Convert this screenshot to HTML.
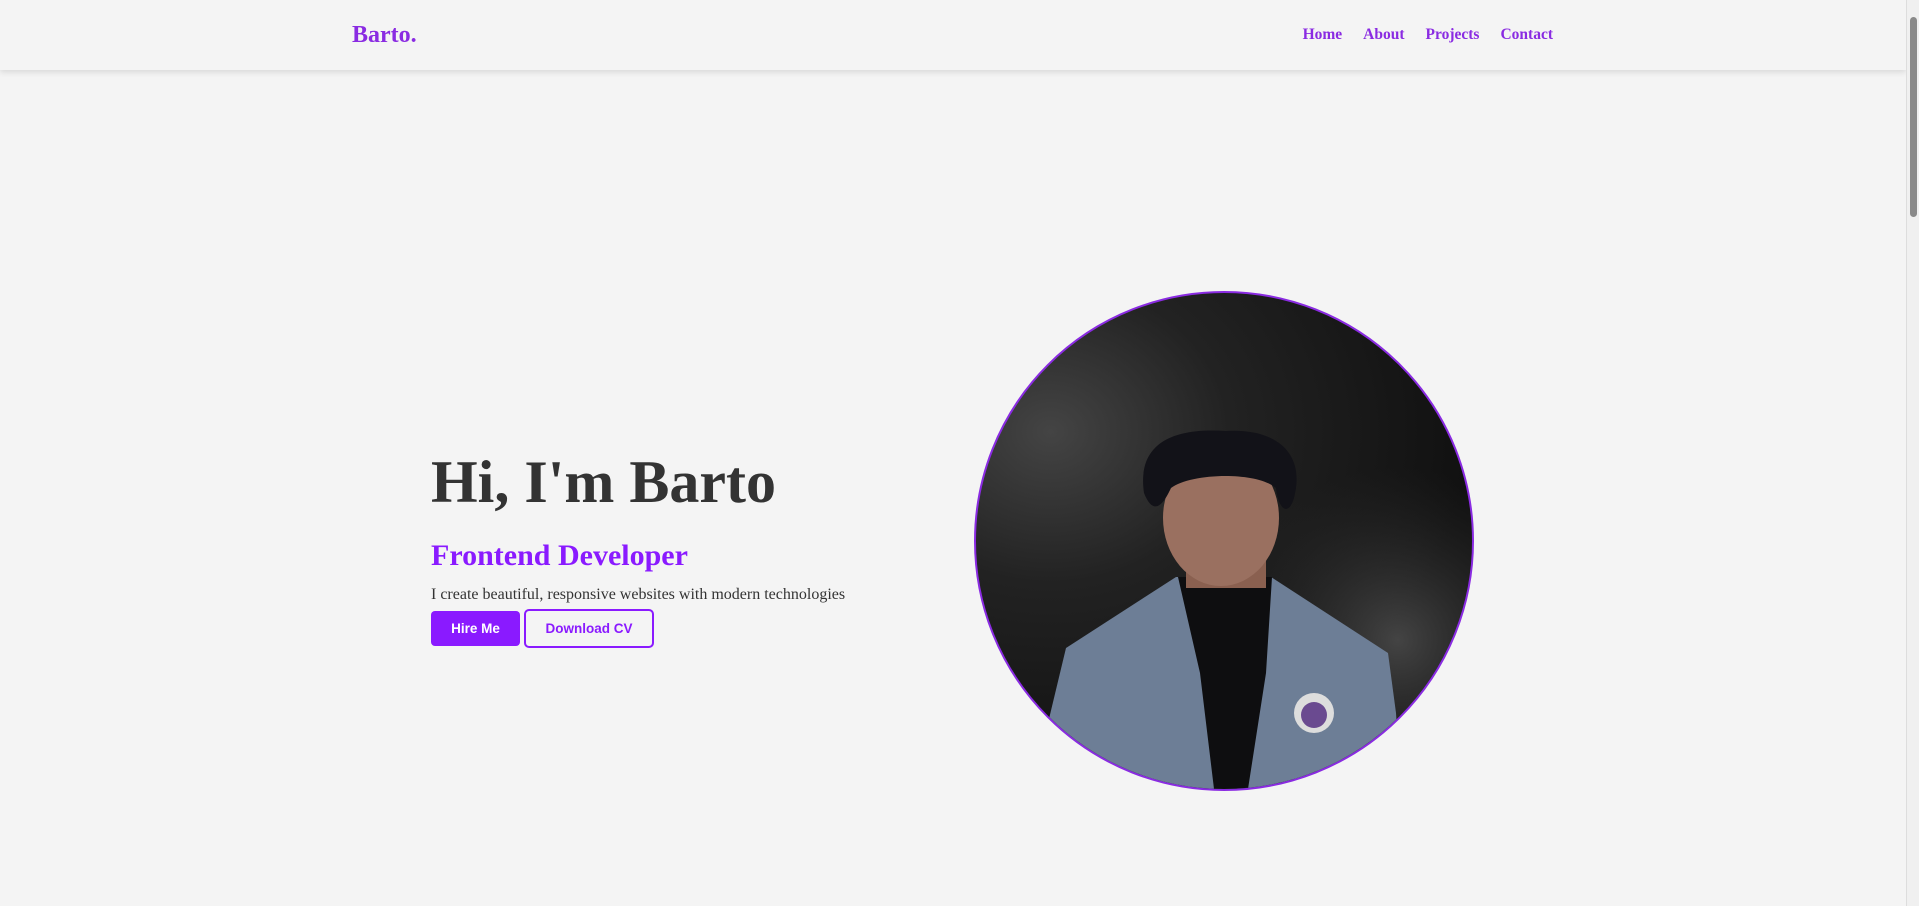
<!DOCTYPE html>
<html><head><meta charset="utf-8"><style>
*{margin:0;padding:0;box-sizing:border-box}
html,body{width:1919px;height:906px;overflow:hidden;background:#f4f4f4}
body{font-family:"Liberation Serif",serif;position:relative}
header{position:absolute;left:0;top:0;width:1906px;height:70px;background:#f4f4f4;box-shadow:0 2px 6px rgba(0,0,0,.12)}
.logo{position:absolute;left:352px;top:22px;font-size:24px;font-weight:bold;color:#8a2be2}
nav{position:absolute;right:353px;top:26px;font-size:15.5px;font-weight:bold;color:#8a2be2}
nav span{margin-left:21px}
h1{position:absolute;left:431px;top:452px;font-size:60px;font-weight:bold;color:#333;line-height:1;white-space:nowrap}
h2{position:absolute;left:431px;top:541px;font-size:30px;font-weight:bold;color:#8a1aff;line-height:1;white-space:nowrap}
p{position:absolute;left:431px;top:586px;font-size:16px;color:#333;white-space:nowrap}
.b1{position:absolute;left:431px;top:611px;width:89px;height:35px;background:#8a1aff;border-radius:4px;color:#fff;font:bold 13.5px "Liberation Sans",sans-serif;text-align:center;line-height:35px}
.b2{position:absolute;left:524px;top:609px;width:130px;height:39px;border:2px solid #8a1aff;border-radius:5px;color:#8a1aff;font:bold 13.5px "Liberation Sans",sans-serif;text-align:center;line-height:35px}
.pic{position:absolute;left:974px;top:291px;width:500px;height:500px;border-radius:50%;border:2px solid #8a2be2;overflow:hidden;background:radial-gradient(ellipse at 15% 28%,#444 0%,#222 30%,#111 70%)}
.sb{position:absolute;right:0;top:0;width:13px;height:906px;background:#f0f0f0;border-left:1px solid #ddd}
.sb div{position:absolute;left:3px;top:17px;width:7px;height:200px;background:#8a8a8a;border-radius:4px}
</style></head><body>
<header><div class="logo">Barto.</div>
<nav><span>Home</span><span>About</span><span>Projects</span><span>Contact</span></nav></header>
<h1>Hi, I'm Barto</h1>
<h2>Frontend Developer</h2>
<p>I create beautiful, responsive websites with modern technologies</p>
<div class="b1">Hire Me</div><div class="b2">Download CV</div>
<div class="pic"><svg width="496" height="496" viewBox="0 0 496 496">
<defs><radialGradient id="g" cx="0.85" cy="0.7" r="0.35"><stop offset="0" stop-color="#666" stop-opacity=".6"/><stop offset="1" stop-color="#333" stop-opacity="0"/></radialGradient></defs>
<rect width="496" height="496" fill="url(#g)"/>
<polygon points="200,284 90,355 72,430 75,496 425,496 420,420 412,360 295,284" fill="#6d7e96"/>
<polygon points="202,284 296,284 290,380 272,496 238,496 224,380" fill="#0e0e10"/>
<rect x="210" y="250" width="80" height="45" fill="#8a6050"/>
<ellipse cx="245" cy="225" rx="58" ry="68" fill="#9a7060"/>
<path d="M168,200 C160,145 205,135 250,138 C300,135 330,160 318,205 C312,225 302,215 300,195 C280,178 215,180 195,195 C188,210 178,225 168,200Z" fill="#121218"/>
<circle cx="338" cy="420" r="20" fill="#ddd"/><circle cx="338" cy="422" r="13" fill="#6a4a90"/>
</svg></div>
<div class="sb"><div></div></div>
</body></html>
